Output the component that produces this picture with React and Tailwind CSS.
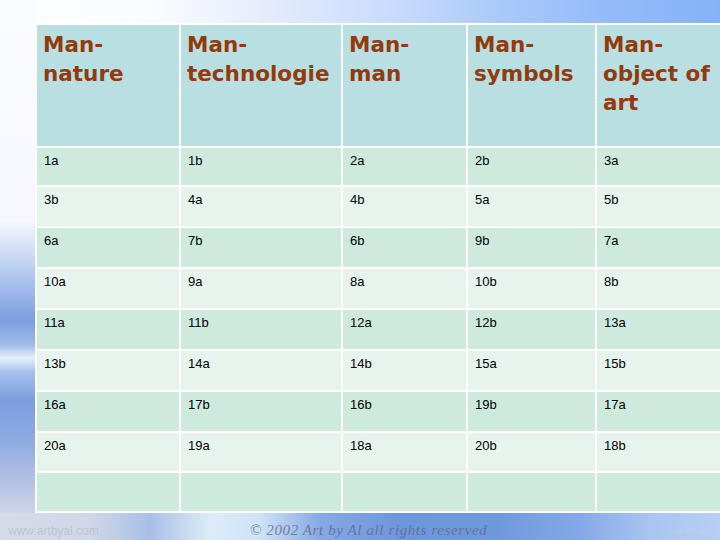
import React from "react";

const headers = [
  ["Man-", "nature"],
  ["Man-", "technologie"],
  ["Man-", "man"],
  ["Man-", "symbols"],
  ["Man-", "object of", "art"],
];

const rows = [
  ["1a", "1b", "2a", "2b", "3a"],
  ["3b", "4a", "4b", "5a", "5b"],
  ["6a", "7b", "6b", "9b", "7a"],
  ["10a", "9a", "8a", "10b", "8b"],
  ["11a", "11b", "12a", "12b", "13a"],
  ["13b", "14a", "14b", "15a", "15b"],
  ["16a", "17b", "16b", "19b", "17a"],
  ["20a", "19a", "18a", "20b", "18b"],
  ["", "", "", "", ""],
];

export default function App() {
  return (
    <div className="w-[720px] h-[540px] overflow-hidden bg-no-repeat bg-[linear-gradient(to_right,#d6dbe7_0px,#cfd7e8_90px,#a9bfe6_150px,#dcecf8_210px,#cfe2f6_260px,#86a9e4_320px,#6e96dc_400px,#7099dc_500px,#84a9e8_580px,#a9c5f0_650px,#b7cff3_720px),linear-gradient(to_bottom,#fbfcff_0px,#f6f8fe_220px,#b9cdf2_270px,#7b9de0_320px,#9fbbea_345px,#e6f0fb_358px,#a7c1ec_372px,#7c9ee0_400px,#8eaae2_440px,#b3c1e4_480px,#d3d9e8_520px,#d8dde9_540px),linear-gradient(to_right,#fcfdff_0px,#fbfcff_150px,#eef2fd_220px,#dde8fc_300px,#c7dafc_400px,#aac9fa_500px,#95bcf9_600px,#83b3f7_720px)] bg-[length:720px_30px,36px_540px,100%_100%] bg-[position:0_513px,0_0,0_0]">
      <div className="pt-[23px] pl-[35px]">
        <div className="grid w-max grid-cols-[142px_160px_123px_127px_140px] grid-rows-[121px_37px_39px_39px_39px_39px_39px_39px_38px_38px] gap-[2px] bg-white p-[2px]">
          {headers.map((lines, i) => (
            <div
              key={"h" + i}
              className="bg-[#b9dfe2] pt-[5px] pl-[6px] font-['DejaVu_Sans',sans-serif] text-[21.5px] font-bold leading-[29px] text-[#933a0c]"
            >
              {lines.map((l, j) => (
                <div key={j} className="whitespace-nowrap">
                  {l}
                </div>
              ))}
            </div>
          ))}
          {rows.map((row, r) =>
            row.map((cell, c) => (
              <div
                key={r + "-" + c}
                className={
                  (r % 2 === 0 ? "bg-[#cdeadd]" : "bg-[#e7f4ed]") +
                  " pt-[5px] pl-[7px] font-['Liberation_Sans',Arial,sans-serif] text-[13px] leading-[15px] text-black"
                }
              >
                {cell}
              </div>
            ))
          )}
        </div>
      </div>
      <div className="flex h-[27px] items-center pt-[8px] pl-[8px]">
        <span className="w-[242px] font-['Liberation_Sans',Arial,sans-serif] text-[12px] text-[#bcc4d2]">
          www.artbyal.com
        </span>
        <span className="font-['Liberation_Serif',serif] text-[15px] italic tracking-[0.6px] text-[#5a6688] opacity-75">
          © 2002 Art by Al all rights reserved
        </span>
        <span className="ml-auto mr-[12px] font-['Liberation_Serif',serif] text-[11px] italic text-[#c3d3ef] opacity-70">
          artbyal
        </span>
      </div>
    </div>
  );
}
